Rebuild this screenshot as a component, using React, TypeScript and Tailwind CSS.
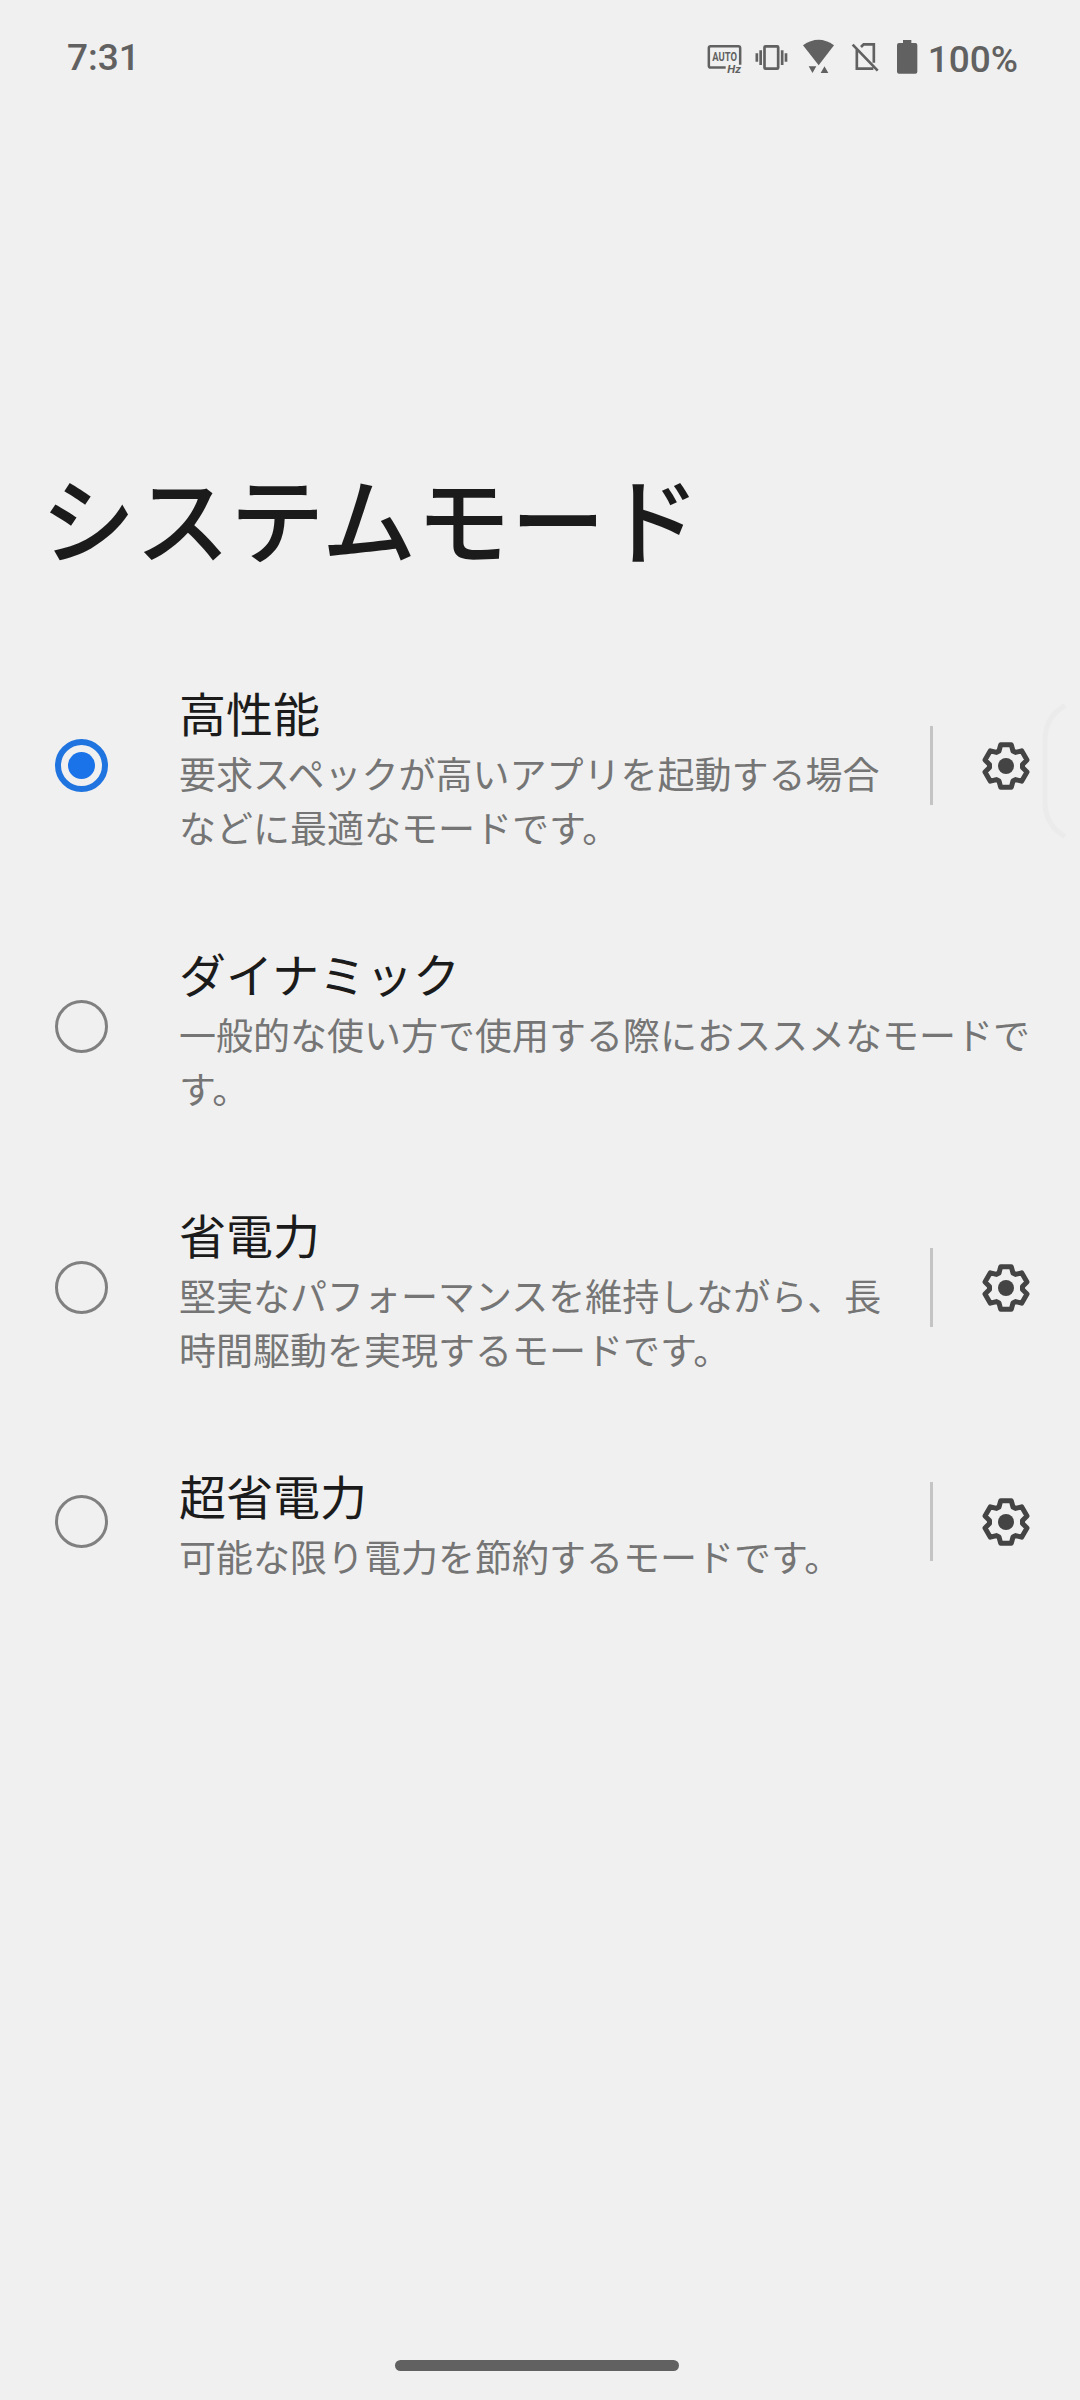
import type { ReactNode } from "react";

type Mode = {
  title: string;
  lines: string[];
  selected?: boolean;
  settings?: boolean;
};

const modes: Mode[] = [
  {
    title: "高性能",
    lines: ["要求スペックが高いアプリを起動する場合", "などに最適なモードです。"],
    selected: true,
    settings: true,
  },
  {
    title: "ダイナミック",
    lines: ["一般的な使い方で使用する際におススメなモードで", "す。"],
  },
  {
    title: "省電力",
    lines: ["堅実なパフォーマンスを維持しながら、長", "時間駆動を実現するモードです。"],
    settings: true,
  },
  {
    title: "超省電力",
    lines: ["可能な限り電力を節約するモードです。"],
    settings: true,
  },
];

function Glyph({ className, box, children }: { className: string; box: string; children: ReactNode }) {
  return (
    <svg className={className} viewBox={box} fill="none" stroke="#616161" strokeWidth={8}>
      {children}
    </svg>
  );
}

function StatusIcons() {
  return (
    <div className="flex items-center">
      <Glyph className="h-10 w-[37px]" box="48 48 111 120">
        <path d="M107 142.500H62Q56.500 142.500 56.500 137V84Q56.500 78.500 62 78.500H145Q150.500 78.500 150.500 84V134" strokeWidth={7.5} />
        <text x="67" y="123" fontSize="36" fontWeight="700" textLength="74" lengthAdjust="spacingAndGlyphs" fill="#616161" stroke="none" fontFamily="Roboto, sans-serif">AUTO</text>
        <text x="112" y="160" fontSize="35" fontWeight="700" fontStyle="italic" textLength="41" lengthAdjust="spacingAndGlyphs" fill="#616161" stroke="none" fontFamily="Roboto, sans-serif">Hz</text>
      </Glyph>
      <Glyph className="ml-[11px] h-10 w-[35px]" box="192 48 105 120">
        <rect x="223.500" y="79" width="41" height="67" rx="3" />
        <path d="M212 91V135M200.500 100V125M276.500 91V135M288 100V125" />
      </Glyph>
      <Glyph className="ml-[13px] h-10 w-[33px]" box="336 48 99 120">
        <path d="M339 76Q386 43 432 76L386 136Z" fill="#616161" stroke="none" />
        <path d="M356 139H379L367.500 159ZM392 159H415L403.500 139Z" fill="#616161" stroke="none" />
      </Glyph>
      <Glyph className="ml-[16px] h-10 w-[28px]" box="483 48 84 120">
        <path d="M488 74L563 152M500.500 88V146H550M513 81L521 73H551.500V128" />
      </Glyph>
      <Glyph className="ml-[17px] h-10 w-[22px]" box="618 48 66 120">
        <path d="M639 60H664V69H676Q682 69 682 75V155Q682 161 676 161H627Q621 161 621 155V75Q621 69 627 69H639Z" fill="#616161" stroke="none" />
      </Glyph>
    </div>
  );
}

const toothAngles = [0, 60, 120, 180, 240, 300];
// Left base, left tip, right tip and right base of one tooth, repeated round the hub.
const toothProfile = [[-21, -45], [-16, -63.5], [16, -63.5], [21, -45]];
const gearPoints = toothAngles
  .flatMap((deg) => {
    const a = (deg * Math.PI) / 180;
    return toothProfile.map(
      ([x, y]) =>
        `${(x * Math.cos(a) - y * Math.sin(a)).toFixed(2)},${(x * Math.sin(a) + y * Math.cos(a)).toFixed(2)}`,
    );
  })
  .join(" ");

function Gear() {
  return (
    <svg className="h-[50px] w-[50px]" viewBox="-75 -75 150 150" fill="none">
      <polygon points={gearPoints} stroke="#444444" strokeWidth={15} strokeLinejoin="round" />
      <circle r="24" fill="#444444" />
    </svg>
  );
}

function Radio({ selected }: { selected?: boolean }) {
  return selected ? (
    <span className="flex size-[53px] items-center justify-center rounded-full border-[6px] border-[#1f74e0]">
      <span className="size-[27px] rounded-full bg-[#1a73e8]" />
    </span>
  ) : (
    <span className="size-[53px] rounded-full border-[3px] border-[#808080]" />
  );
}

function ModeRow({ mode }: { mode: Mode }) {
  return (
    <li className="flex items-center py-[45px]">
      <div className="ml-[55px] w-[124px] shrink-0">
        <div className="flex">
          <Radio selected={mode.selected} />
        </div>
      </div>
      <div className="-mb-[3px] flex-1 whitespace-nowrap">
        <div className="h-[67px] text-[47px] leading-[64px] text-[#1b1b1b]">{mode.title}</div>
        {mode.lines.map((line) => (
          <div key={line} className="h-[53.500px] text-[37px] leading-[53.500px] text-[#757575]">
            {line}
          </div>
        ))}
      </div>
      {mode.settings && (
        <div className="flex w-[150px] shrink-0 items-center">
          <span className="h-[79px] w-[3px] bg-[#c4c4c4]" />
          <span className="ml-[48px]">
            <Gear />
          </span>
        </div>
      )}
    </li>
  );
}

export default function App() {
  return (
    <div
      lang="ja"
      className="relative flex h-[2400px] w-[1080px] flex-col overflow-hidden bg-[#f0f0f0] font-['Noto_Sans_CJK_JP',sans-serif]"
    >
      <header className="flex h-[112px] items-center justify-between pl-[67px] font-[Roboto,sans-serif] text-[37px] font-medium text-[#616161]">
        <span className="pt-[3px]">7:31</span>
        <div className="flex items-center pr-[62px]">
          <StatusIcons />
          <span className="ml-[10px] pt-[7px]">100%</span>
        </div>
      </header>
      <h1 className="mt-[336px] h-[140px] pl-[41px] text-[94.500px] leading-[136px] font-medium text-[#1b1b1b]">
        システムモード
      </h1>
      <ul className="mt-[47px]">
        {modes.map((mode) => (
          <ModeRow key={mode.title} mode={mode} />
        ))}
      </ul>
      <svg className="absolute top-[700px] left-[1040px] h-[142px] w-10" viewBox="0 0 40 142" fill="none">
        <path d="M25 5.500Q5 17 5 40V102Q5 125 25 136.500" stroke="#ebebeb" strokeWidth="5" />
      </svg>
      <div className="mt-auto mb-[29px] ml-[395px] h-[11px] w-[284px] rounded-full bg-[#616161]" />
    </div>
  );
}
